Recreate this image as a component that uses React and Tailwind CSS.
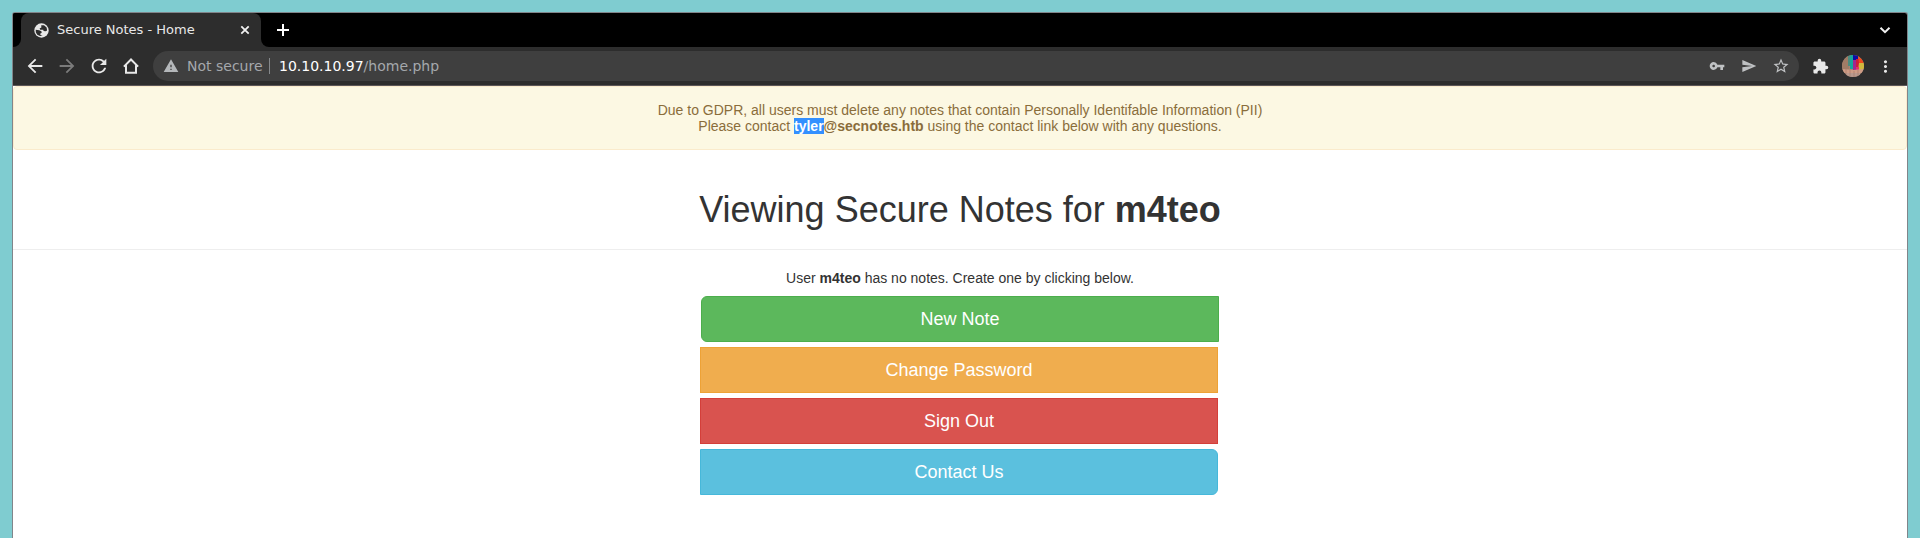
import React from "react";
import {
  MdArrowBack, MdArrowForward, MdRefresh, MdWarning,
  MdVpnKey, MdSend, MdStarBorder, MdExtension, MdMoreVert,
} from "react-icons/md";

function Globe() {
  return (
    <svg className="shrink-0" width="15" height="15" viewBox="0 0 15 15">
      <circle cx="7.5" cy="7.5" r="7.2" fill="#e8e8e8" />
      <g fill="#2d2d2d">
        <path d="M7.2 2.2 H10 L12.6 4.6 L13.1 7.4 L11.6 8.3 L9.6 8 L9.2 6.7 H6.2 L5.6 5.5 L7.4 4.6 Z" />
        <path d="M1.7 6.8 L5.2 7.3 L7.4 8.3 L7.7 9.8 L6.2 10.8 L6.5 12 L8.6 13 L6 13.1 L3.3 11.7 L1.9 9.4 Z" />
      </g>
    </svg>
  );
}

function TabStrip() {
  return (
    <div className="flex h-[34px] shrink-0 items-stretch bg-black">
      <div className="flex w-2 items-end bg-[#2d2d2d]">
        <div className="h-full w-full rounded-br-lg bg-black" />
      </div>
      <div className="bg-black">
        <div className="flex h-full w-[240px] items-center rounded-t-lg bg-[#2d2d2d] pl-[13px] pr-[10px] text-[#e8e8e8]">
          <Globe />
          <span className="ml-2 grow whitespace-nowrap pb-px text-[13px] leading-4">Secure Notes - Home</span>
          <svg className="shrink-0" width="12" height="12" viewBox="0 0 12 12" fill="none" stroke="#f1f1f1" strokeWidth="1.8">
            <path d="M2.3 2.3 L9.7 9.7 M9.7 2.3 L2.3 9.7" />
          </svg>
        </div>
      </div>
      <div className="w-2 bg-[#2d2d2d]">
        <div className="h-full w-full rounded-bl-lg bg-black" />
      </div>
      <div className="flex grow items-center justify-between pl-2 pr-4">
        <svg width="12" height="12" viewBox="0 0 12 12" fill="none" stroke="#ffffff" strokeWidth="2">
          <path d="M6 0 V12 M0 6 H12" />
        </svg>
        <svg width="12" height="12" viewBox="0 0 12 12" fill="none" stroke="#f1f1f1" strokeWidth="2">
          <path d="M1.5 3.7 L6 8.2 L10.5 3.7" />
        </svg>
      </div>
    </div>
  );
}

function Avatar() {
  return (
    <svg width="22" height="22" viewBox="0 0 22 22">
      <defs>
        <clipPath id="avatar"><circle cx="11" cy="11" r="11" /></clipPath>
        <filter id="soft"><feGaussianBlur stdDeviation="0.6" /></filter>
      </defs>
      <g clipPath="url(#avatar)">
        <rect width="22" height="22" fill="#a58474" />
        <g filter="url(#soft)">
          <path d="M0 0H7V14H0Z" fill="#a07c66" />
          <path d="M6 0H8V11H6Z" fill="#4b8c80" />
          <path d="M8 0H11V14H8Z" fill="#15a69a" />
          <path d="M11 0H16V5H11Z" fill="#0b08a5" />
          <path d="M11 5H14V16H11Z" fill="#a02890" />
          <path d="M14 4H18V12H14Z" fill="#ce1c3b" />
          <path d="M16 1L22 6V11L17 8Z" fill="#f0481a" />
          <path d="M17 8H22V15H16Z" fill="#d2b83c" />
          <path d="M14 12H17V15H14Z" fill="#e52a72" />
          <path d="M0 14L11 15L22 14V18H0Z" fill="#cf9c85" />
          <path d="M4 18H18V22H4Z" fill="#b9998d" />
          <path d="M4 14V20 M8 15V21 M12 16V22 M16 15V21" stroke="#a87c6a" strokeWidth="0.7" />
        </g>
      </g>
    </svg>
  );
}

function Toolbar() {
  return (
    <div className="flex h-[38px] shrink-0 items-center bg-[#2d2d2d] text-[#e8e8e8]">
      <div className="flex w-[140px] items-center pl-[11px]">
        <MdArrowBack size={22} />
        <MdArrowForward size={22} className="ml-[10px] text-[#7b7b7b]" />
        <MdRefresh size={22} className="ml-[10px]" />
        <svg className="ml-[13px]" width="16" height="16" viewBox="0 0 16 16" fill="none" stroke="currentColor" strokeWidth="2">
          <path d="M0.9 8.6 L8 1.5 L15.1 8.6 M3 7.2 V14.8 H13 V7.2" />
        </svg>
      </div>
      <div className="flex h-[30px] w-[1646px] items-center rounded-full bg-[#3f3f3f] pl-[10px] pr-[10px] text-[14px] leading-5">
        <MdWarning size={16} className="text-[#b4b7ba]" />
        <span className="ml-2 w-[76px] whitespace-nowrap text-[#a5a8ac]">Not secure</span>
        <span className="ml-[6px] h-4 w-px bg-[#85888b]" />
        <span className="ml-[9px] grow whitespace-nowrap text-[#a5a8ac]">
          <span className="text-white">10.10.10.97</span>/home.php
        </span>
        <div className="flex items-center gap-4 text-[#bfc1c3]">
          <MdVpnKey size={16} />
          <MdSend size={16} />
          <MdStarBorder size={18} className="-mx-px" />
        </div>
      </div>
      <div className="flex grow items-center pl-[13px]">
        <MdExtension size={17} />
        <div className="ml-[13px]"><Avatar /></div>
        <MdMoreVert size={19} className="ml-[12px]" />
      </div>
    </div>
  );
}

function Action({ className, children }) {
  return (
    <button className={"block h-[46px] w-[518px] border text-[18px] leading-6 text-white " + className}>
      {children}
    </button>
  );
}

export default function App() {
  return (
    <div className="h-[538px] w-[1920px] overflow-hidden bg-[#7fccd0] px-3 pt-3 font-['DejaVu_Sans',sans-serif]">
      <div className="flex h-full flex-col overflow-hidden rounded-t-[3px] border border-b-0 border-[#81858a] bg-white">
        <TabStrip />
        <Toolbar />
        <div className="h-px shrink-0 bg-[#5b5658]" />
        <main className="flex flex-col font-['Liberation_Sans',Arial,sans-serif] text-[14px] leading-4 text-[#333333]">
          <div className="rounded-[4px] border border-[#faebcc] bg-[#fcf8e3] p-[15px] text-center text-[#8a6d3b]">
            Due to GDPR, all users must delete any notes that contain Personally Identifable Information (PII)
            <br />
            Please contact <strong><span className="bg-[#3390ff] text-white">tyler</span>@secnotes.htb</strong> using the contact link below with any questions.
          </div>
          <div className="border-b border-[#eeeeee] pb-[19px] pt-10 text-center">
            <h1 className="text-[36px] leading-10">Viewing Secure Notes for <b>m4teo</b></h1>
          </div>
          <p className="mt-5 text-center">User <b>m4teo</b> has no notes. Create one by clicking below.</p>
          <div className="mt-[10px] flex flex-col gap-[5px] pl-[687px]">
            <Action className="ml-px rounded-l-md border-[#4cae4c] bg-[#5cb85c]">New Note</Action>
            <Action className="border-[#eea236] bg-[#f0ad4e]">Change Password</Action>
            <Action className="border-[#d43f3a] bg-[#d9534f]">Sign Out</Action>
            <Action className="rounded-r-md border-[#46b8da] bg-[#5bc0de]">Contact Us</Action>
          </div>
        </main>
      </div>
    </div>
  );
}
